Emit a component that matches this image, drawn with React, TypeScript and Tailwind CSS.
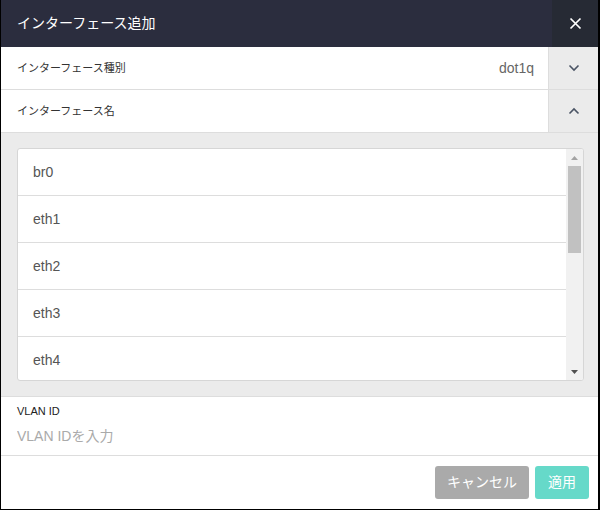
import React from 'react';

const font = { fontFamily: '"Liberation Sans", "Noto Sans CJK JP", sans-serif' };

const interfaces = ['br0', 'eth1', 'eth2', 'eth3', 'eth4'];

function Chevron({ up = false }: { up?: boolean }) {
    return (
        <svg width="12" height="8" viewBox="0 0 12 8" className="text-[#4a5464]">
            <path
                d={up ? 'M1.5 6.5 L6 2 L10.5 6.5' : 'M1.5 1.5 L6 6 L10.5 1.5'}
                fill="none"
                stroke="currentColor"
                strokeWidth="1.6"
            />
        </svg>
    );
}

export default function App() {
    return (
        <div className="w-[600px] h-[510px] bg-white border-l border-b border-black border-r-2 flex flex-col" style={font}>
            {/* header */}
            <div className="h-[47px] bg-[#2b2d3e] flex items-stretch shrink-0">
                <div className="flex-1 flex items-center pl-[16px] text-white text-[14px]">インターフェース追加</div>
                <button className="w-[46px] bg-[#262a34] flex items-center justify-center">
                    <svg width="13" height="13" viewBox="0 0 13 13">
                        <path d="M1.5 1.5 L11.5 11.5 M11.5 1.5 L1.5 11.5" stroke="white" strokeWidth="1.7" />
                    </svg>
                </button>
            </div>

            {/* type */}
            <div className="h-[43px] flex border-b border-[#dddddd] shrink-0">
                <div className="flex-1 flex items-center justify-between pl-[16px] pr-[14px]">
                    <span className="text-[11px] text-[#333]">インターフェース種別</span>
                    <span className="text-[14px] text-[#666]">dot1q</span>
                </div>
                <div className="w-[50px] bg-[#ebebeb] border-l border-[#dddddd] flex items-center justify-center">
                    <Chevron />
                </div>
            </div>

            {/* name */}
            <div className="h-[43px] flex border-b border-[#dddddd] shrink-0">
                <div className="flex-1 flex items-center pl-[16px]">
                    <span className="text-[11px] text-[#333]">インターフェース名</span>
                </div>
                <div className="w-[50px] bg-[#ebebeb] border-l border-[#dddddd] flex items-center justify-center">
                    <Chevron up />
                </div>
            </div>

            {/* list */}
            <div className="h-[264px] bg-[#ebebeb] border-b border-[#dddddd] pt-[15px] pl-[16px] pr-[14px] shrink-0">
                <div className="h-[233px] bg-white border border-[#d6d6d6] rounded-[3px] flex overflow-hidden">
                    <div className="flex-1 overflow-hidden">
                        {interfaces.map((name) => (
                            <div
                                key={name}
                                className="h-[47px] flex items-center pl-[15px] text-[14px] text-[#555] border-b border-[#dddddd]"
                            >
                                {name}
                            </div>
                        ))}
                    </div>
                    <div className="w-[17px] bg-[#f1f1f1] flex flex-col items-center">
                        <div className="h-[17px] flex items-center justify-center">
                            <svg width="7" height="4" viewBox="0 0 7 4">
                                <path d="M0 4 L3.5 0 L7 4 Z" fill="#a3a3a3" />
                            </svg>
                        </div>
                        <div className="w-[13px] h-[87px] bg-[#c1c1c1]" />
                        <div className="flex-1" />
                        <div className="h-[17px] flex items-center justify-center">
                            <svg width="7" height="4" viewBox="0 0 7 4">
                                <path d="M0 0 L7 0 L3.5 4 Z" fill="#505050" />
                            </svg>
                        </div>
                    </div>
                </div>
            </div>

            {/* vlan id */}
            <div className="h-[59px] border-b border-[#dddddd] pl-[16px] pt-[6px] shrink-0 flex flex-col items-start">
                <div className="text-[11px] text-[#222] leading-[16px]">VLAN ID</div>
                <input
                    className="mt-[6px] h-[22px] w-[400px] text-[14px] leading-[22px] text-[#333] placeholder-[#aaaaaa] outline-none bg-transparent"
                    placeholder="VLAN IDを入力"
                />
            </div>

            {/* footer */}
            <div className="flex-1 flex items-start justify-end gap-[6px] pt-[10px] pr-[9px]">
                <button className="h-[33px] px-[12px] rounded-[3px] bg-[#aaaaaa] text-white text-[14px]">キャンセル</button>
                <button className="h-[33px] px-[13px] rounded-[3px] bg-[#66d9c9] text-white text-[14px]">適用</button>
            </div>
        </div>
    );
}
